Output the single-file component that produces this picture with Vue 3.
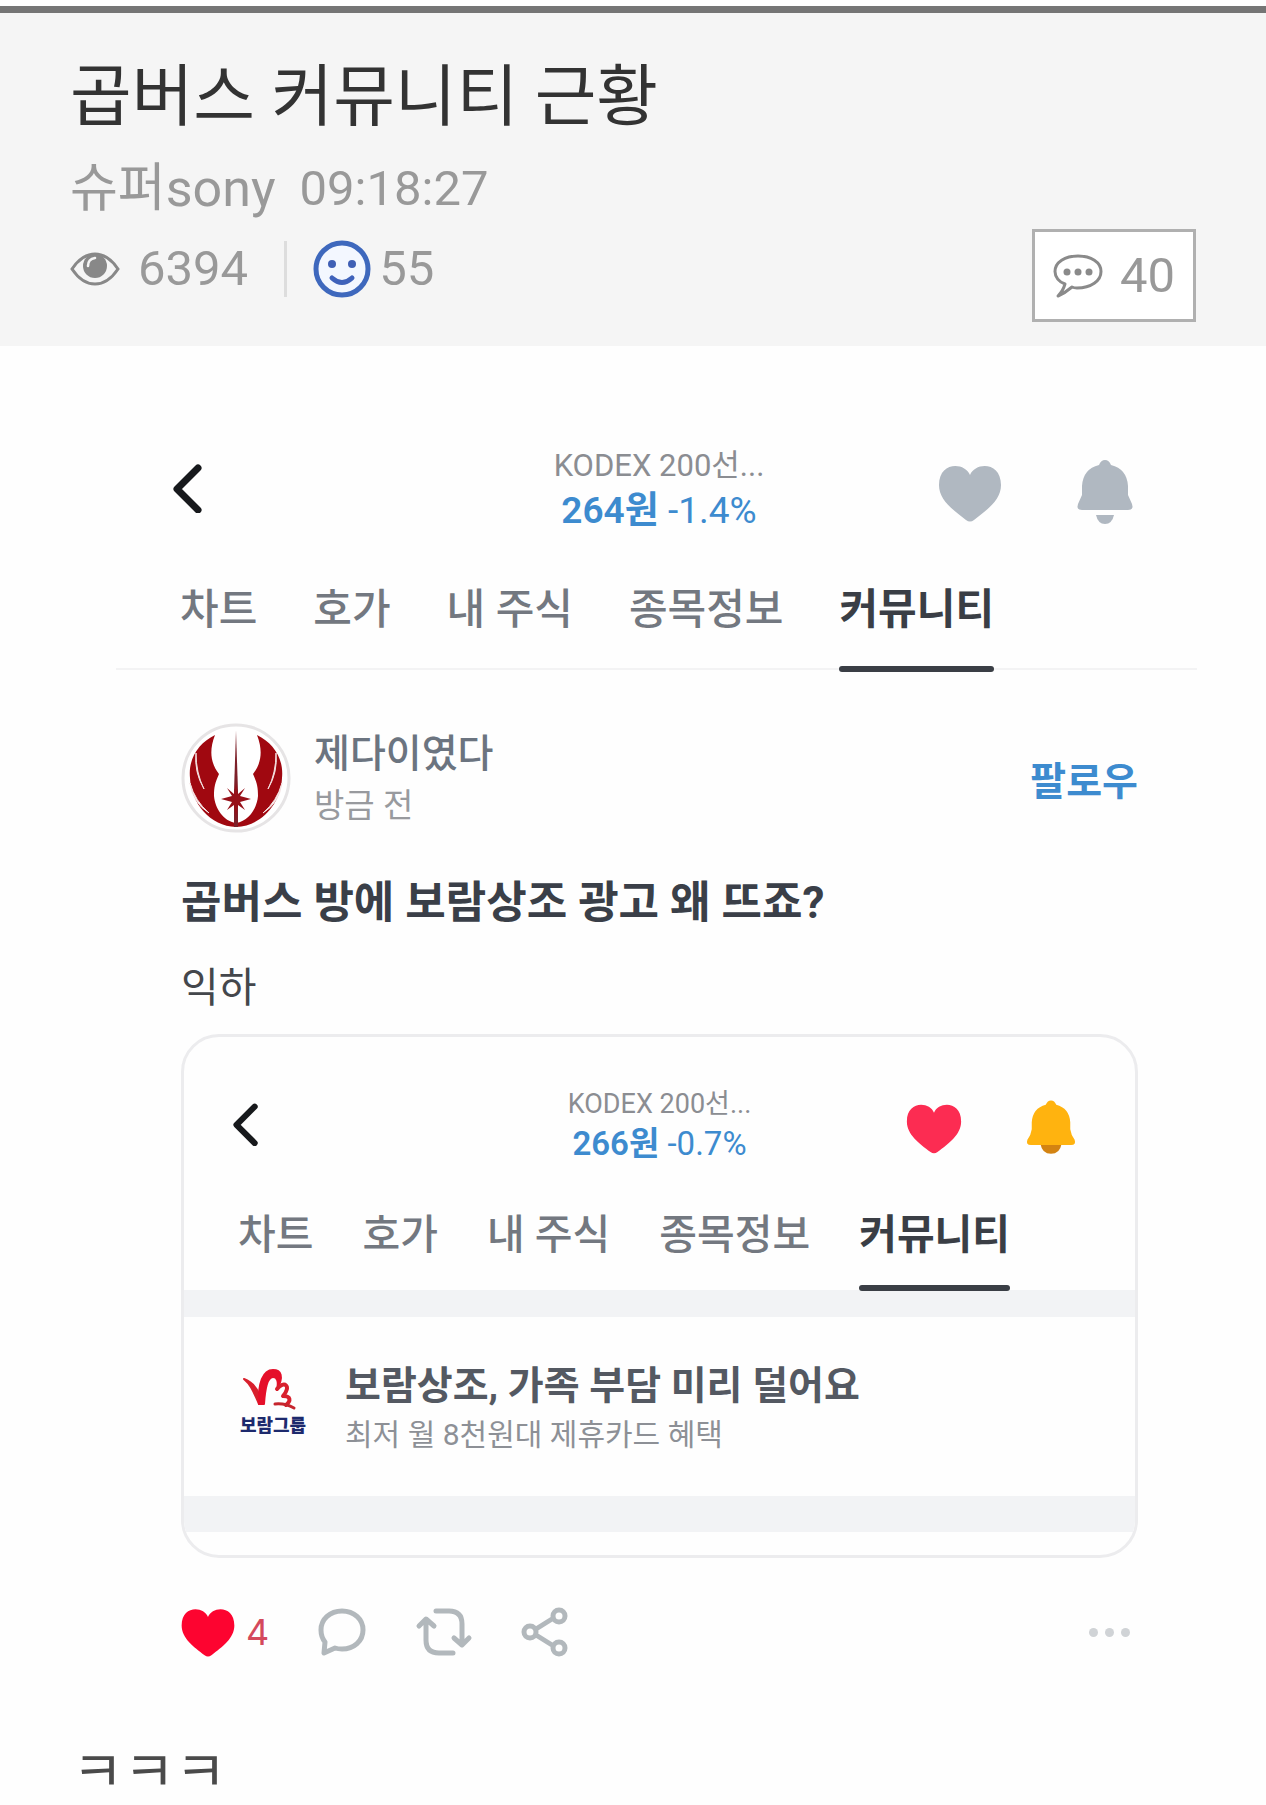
<script setup>
import { ref } from 'vue';

const tabs = ['차트', '호가', '내 주식', '종목정보', '커뮤니티'];
const activeTab = ref('커뮤니티');
const likes = ref(4);
</script>

<template>
  <svg class="sprite" aria-hidden="true">
    <symbol id="back" viewBox="0 0 30 50">
      <path d="M25 5 4 26l21 21" fill="none" stroke="currentColor" stroke-width="7" stroke-linecap="round" stroke-linejoin="round" />
    </symbol>
    <symbol id="heart" viewBox="0 0 80 80">
      <path d="M40 27C45 14 71 13 71 37c0 15-14 25-27 35q-4 3-8 0C23 62 9 52 9 37 9 13 35 14 40 27z" fill="currentColor" />
    </symbol>
  </svg>

  <header class="post-header">
    <h1>곱버스 커뮤니티 근황</h1>
    <p class="meta"><span class="writer">슈퍼sony</span><time>09:18:27</time></p>
    <div class="info">
      <div class="stats">
        <svg class="eye" viewBox="0 0 50 34">
          <path d="M2 17Q12 2 25 2t23 15Q38 32 25 32T2 17z" fill="none" stroke="#888" stroke-width="3" />
          <circle cx="25" cy="14" r="12" fill="#888" />
          <path d="M18 14q0-7 7-8" fill="none" stroke="#f5f5f5" stroke-width="2.6" stroke-linecap="round" />
        </svg>
        <span class="views">6394</span>
        <span class="divider"></span>
        <svg class="smile" viewBox="0 0 58 58">
          <circle cx="29" cy="29" r="26" fill="#f3f7ff" stroke="#3e68bd" stroke-width="5" />
          <circle cx="19" cy="24" r="4" fill="#3f5fb5" />
          <circle cx="39" cy="24" r="4" fill="#3f5fb5" />
          <path d="M19 38q10 9 20 0" fill="none" stroke="#3f62bb" stroke-width="5" stroke-linecap="round" />
        </svg>
        <span>55</span>
      </div>
      <a class="comments" href="#comments">
        <svg viewBox="0 0 50 44">
          <path d="M25 2c13 0 23 6 23 15.500S38 34 24 34q-3 0-5-1Q12 39 5 42q5-5 7-12C6 28 2 23 2 17.500 2 8 12 2 25 2z" fill="none" stroke="#8a8a8a" stroke-width="3" stroke-linejoin="round" />
          <circle cx="14" cy="18" r="3.500" fill="#8a8a8a" />
          <circle cx="25" cy="18" r="3.500" fill="#8a8a8a" />
          <circle cx="36" cy="18" r="3.500" fill="#8a8a8a" />
        </svg>
        <span>40</span>
      </a>
    </div>
  </header>

  <main>
    <section class="app">
      <div class="toolbar">
        <button class="back" aria-label="뒤로"><svg><use href="#back" /></svg></button>
        <div class="stock">
          <p class="stock-name">KODEX 200선...</p>
          <p class="price"><b>264원</b> -1.4%</p>
        </div>
        <div class="tools">
          <button aria-label="관심"><svg><use href="#heart" /></svg></button>
          <button aria-label="알림">
            <svg viewBox="0 -3 80 80">
              <path d="M40 9q4 0 6 5 16 4 17 21v9l4 9q2 6-4 6H17q-6 0-4-6l4-9v-9q1-17 17-21 2-5 6-5z" fill="currentColor" />
              <path d="M31 64h18q-2 9-9 9t-9-9z" fill="currentColor" />
            </svg>
          </button>
        </div>
      </div>

      <nav class="tabs">
        <button v-for="tab in tabs" :key="tab" :class="{ active: tab === activeTab }" @click="activeTab = tab">{{ tab }}</button>
      </nav>

      <article class="thread">
        <div class="author">
          <svg class="avatar" viewBox="0 0 110 110">
            <circle cx="55" cy="55" r="53" fill="#fff" stroke="#e6e4e5" stroke-width="3" />
            <g id="wing">
              <path d="M34 12C18 20 7 35 9 55c1 25 20 48 46 49v-4C42 98 34 85 33 73c0-9 1-13 5-22C31 42 27 30 34 12z" fill="#a00810" />
              <path d="M15 30q-2 19 8 36Q15 50 15 30zM9 60q3 20 19 30Q14 78 9 60z" fill="#fff" stroke="#f4dede" />
            </g>
            <use href="#wing" transform="matrix(-1 0 0 1 110 0)" />
            <path d="M55 8l2 60v36h-4V68z" fill="#7d2029" />
            <path d="M55 60l2 11 7-6-5 8 11 3-11 3 5 8-7-5-2 13-2-13-7 5 5-8-11-3 11-3-5-8 7 6z" fill="#971019" />
          </svg>
          <div class="who">
            <p class="nick">제다이였다</p>
            <p class="ago">방금 전</p>
          </div>
          <button class="follow">팔로우</button>
        </div>
        <h2>곱버스 방에 보람상조 광고 왜 뜨죠?</h2>
        <p class="text">익하</p>

        <div class="shot">
          <div class="toolbar">
            <button class="back" aria-label="뒤로"><svg><use href="#back" /></svg></button>
            <div class="stock">
              <p class="stock-name">KODEX 200선...</p>
              <p class="price"><b>266원</b> -0.7%</p>
            </div>
            <div class="tools">
              <button class="liked" aria-label="관심"><svg><use href="#heart" /></svg></button>
              <button class="notified" aria-label="알림">
                <svg viewBox="0 -3 80 80">
                  <path d="M28 60h24q-2 11-12 11T28 60z" fill="#d38312" />
                  <path d="M40 10q4 0 6 5 15 4 16 20v8q1 7 5 12 2 6-4 6H17q-6 0-4-6 4-5 5-12v-8q1-16 16-20 2-5 6-5z" fill="currentColor" />
                </svg>
              </button>
            </div>
          </div>
          <nav class="tabs">
            <button v-for="tab in tabs" :key="tab" :class="{ active: tab === '커뮤니티' }">{{ tab }}</button>
          </nav>
          <a class="ad" href="#ad">
            <span class="brand">
              <svg viewBox="0 0 68 44">
                <g stroke-linecap="round" stroke-linejoin="round">
                  <path d="M5 10q11 4 16 17l-1 8C14 22 13 17 5 10z" fill="#d8202d" stroke="#d8202d" stroke-width="2" />
                  <path d="M20 35C19 14 24 1 34 1c8 0 11 6 4 20 2-9 0-13-4-13-6 0-8 12-9 27z" fill="#e5102a" stroke="#e5102a" stroke-width="2" />
                  <path d="M38 20c7-9 15-3 6 7 8 0 8 5 3 9" fill="none" stroke="#d8202d" stroke-width="4" />
                  <path d="M36 35q10-1 19 4" fill="none" stroke="#c6252d" stroke-width="3" />
                </g>
              </svg>
              <b>보람그룹</b>
            </span>
            <span class="copy">
              <strong>보람상조, 가족 부담 미리 덜어요</strong>
              <small>최저 월 8천원대 제휴카드 혜택</small>
            </span>
          </a>
        </div>

        <div class="actions">
          <button class="like" @click="likes++"><svg class="like-icon"><use href="#heart" /></svg>{{ likes }}</button>
          <button aria-label="댓글">
            <svg viewBox="0 0 50 50">
              <path d="M25 4c12 0 21 8 21 19S37 42 25 42q-4 0-7-1L7 46l1-11Q4 30 4 23C4 12 13 4 25 4z" fill="none" stroke="currentColor" stroke-width="5" stroke-linejoin="round" />
            </svg>
          </button>
          <button aria-label="리포스트">
            <svg class="repost" viewBox="0 0 58 50">
              <path d="M21 4h13q13 0 13 13v20M39 31l8 7 7-7M38 46H24Q11 46 11 33V13M4 19l7-7 8 7" fill="none" stroke="currentColor" stroke-width="5" stroke-linecap="round" stroke-linejoin="round" />
            </svg>
          </button>
          <button aria-label="공유">
            <svg viewBox="0 0 50 50">
              <path d="M15 22l16-10M15 28l16 10" stroke="currentColor" stroke-width="5" />
              <g fill="none" stroke="currentColor" stroke-width="5">
                <circle cx="9" cy="25" r="6" />
                <circle cx="38" cy="9" r="6" />
                <circle cx="38" cy="41" r="6" />
              </g>
            </svg>
          </button>
          <button class="more" aria-label="더보기"><i></i><i></i><i></i></button>
        </div>
      </article>
    </section>
    <p class="comment-text">ㅋㅋㅋ</p>
  </main>
</template>

<style>
body {
  margin: 0;
  background: #fefefe;
}
</style>

<style scoped>
* {
  box-sizing: border-box;
}

h1, h2, p {
  margin: 0;
}

header, main {
  font-family: Roboto, "Noto Sans CJK KR", sans-serif;
}

button {
  padding: 0;
  border: 0;
  background: none;
  color: inherit;
  font: inherit;
  cursor: pointer;
}

a {
  color: inherit;
  text-decoration: none;
}

svg {
  display: block;
  flex: none;
}

.sprite {
  position: absolute;
  width: 0;
  height: 0;
}

/* post header */
.post-header {
  margin-top: 6px;
  padding: 44px 70px 24px;
  border-top: 7px solid #757575;
  background: #f5f5f5;
  color: #999;
  font-size: 49px;
  line-height: 60px;
}

h1 {
  color: #333;
  font-size: 67px;
  font-weight: 400;
  line-height: 80px;
}

.meta {
  display: flex;
  gap: 24px;
  margin: 22px 0 10px;
}

.writer {
  font-size: 52px;
}

.info {
  display: flex;
  align-items: center;
  justify-content: space-between;
}

.stats {
  display: flex;
  align-items: center;
  padding-bottom: 14px;
}

.eye {
  width: 50px;
  height: 34px;
}

.views {
  margin-left: 18px;
}

.divider {
  width: 3px;
  height: 56px;
  margin: 0 26px 0 36px;
  background: #ddd;
}

.smile {
  width: 58px;
  height: 58px;
  margin-right: 8px;
}

.comments {
  display: flex;
  align-items: center;
  gap: 17px;
  height: 93px;
  padding: 0 18px;
  border: 3px solid #b0b0b0;
  background: #fff;
}

.comments svg {
  width: 50px;
  height: 44px;
}

/* stock app */
.app {
  margin: 97px 69px 0 116px;
}

.toolbar {
  display: grid;
  grid-template-columns: 1fr auto 1fr;
  align-items: center;
  padding: 0 52px 0 57px;
}

.back {
  justify-self: start;
  color: #17191c;
}

.back svg {
  width: 30px;
  height: 50px;
}

.stock {
  text-align: center;
}

.stock-name {
  color: #8b8d92;
  font-size: 31px;
  line-height: 45px;
}

.price {
  color: #3d8bcf;
  font-size: 37px;
  line-height: 45px;
}

.price b {
  font-weight: 600;
}

.tools {
  display: flex;
  justify-content: flex-end;
  gap: 55px;
  color: #b0b8c1;
}

.tools svg {
  width: 80px;
  height: 80px;
}

.tabs {
  display: flex;
  gap: 56px;
  margin-top: 47px;
  padding: 0 64px;
  border-bottom: 2px solid #f3f3f4;
  color: #737880;
  font-size: 42px;
  font-weight: 500;
  line-height: 60px;
}

.tabs button {
  position: relative;
  padding-bottom: 28px;
  white-space: nowrap;
}

.tabs .active {
  color: #3a3e45;
  font-weight: 700;
}

.tabs .active::after {
  content: '';
  position: absolute;
  right: 0;
  bottom: -4px;
  left: 0;
  height: 6px;
  border-radius: 3px;
  background: #3a3e45;
}

/* thread */
.thread {
  padding: 53px 59px 0 65px;
}

.author {
  display: flex;
  align-items: center;
}

.avatar {
  width: 110px;
  height: 110px;
  margin-right: 23px;
}

.who {
  padding-top: 4px;
  line-height: 52px;
}

.nick {
  color: #6b7480;
  font-size: 39px;
  font-weight: 500;
}

.ago {
  color: #989a9e;
  font-size: 33px;
}

.follow {
  margin-left: auto;
  color: #3d8bcf;
  font-size: 39px;
  font-weight: 700;
}

h2 {
  margin-top: 40px;
  color: #3a3f48;
  font-size: 44px;
  font-weight: 700;
  line-height: 60px;
}

.text {
  margin-top: 25px;
  color: #44474c;
  font-size: 41px;
  line-height: 60px;
}

/* attached capture */
.shot {
  overflow: hidden;
  margin-top: 16px;
  padding: 47px 0 23px;
  border: 3px solid #ececee;
  border-radius: 38px;
}

.shot .toolbar {
  padding: 0 49px;
}

.shot .back svg {
  width: 26px;
  height: 44px;
}

.shot .stock-name {
  font-size: 27px;
  line-height: 40px;
}

.shot .price {
  font-size: 33px;
  line-height: 40px;
}

.shot .tools {
  gap: 47px;
}

.shot .tools svg {
  width: 70px;
  height: 70px;
}

.tools .liked {
  color: #fc2c52;
}

.tools .notified {
  color: #ffb30f;
}

.shot .tabs {
  gap: 49px;
  margin-top: 41px;
  padding: 0 54px;
  border-bottom: 27px solid #f2f3f5;
  font-size: 41px;
}

.shot .tabs button {
  padding-bottom: 25px;
}

.shot .tabs .active::after {
  bottom: -1px;
}

.ad {
  display: flex;
  gap: 38px;
  padding: 42px 55px 39px;
  border-bottom: 36px solid #f2f3f5;
}

.brand {
  display: flex;
  flex-direction: column;
  align-items: center;
  width: 68px;
  padding-top: 10px;
  color: #1d2a6d;
  font-size: 18px;
  line-height: 26px;
  white-space: nowrap;
}

.brand svg {
  width: 68px;
  height: 44px;
}

.brand b {
  font-weight: 900;
}

.copy {
  display: flex;
  flex-direction: column;
}

.copy strong {
  color: #545962;
  font-size: 39px;
  font-weight: 700;
  line-height: 54px;
}

.copy small {
  color: #8d9096;
  font-size: 30px;
  line-height: 44px;
}

/* actions */
.actions {
  display: flex;
  align-items: center;
  height: 60px;
  margin-top: 44px;
  color: #b2b8bc;
}

.actions button {
  margin-right: 48px;
}

.actions svg {
  width: 50px;
  height: 50px;
}

.actions .repost {
  width: 58px;
}

.actions .like {
  display: flex;
  align-items: center;
  color: #d4495c;
  font-family: Inter, sans-serif;
  font-size: 36px;
}

.actions .like-icon {
  width: 68px;
  height: 68px;
  margin: -8px 4px 0 -7px;
  color: #fd0430;
}

.actions .more {
  display: flex;
  gap: 7px;
  margin: 0 8px 0 auto;
}

.more i {
  width: 9px;
  height: 9px;
  border-radius: 50%;
  background: #d0d3d6;
}

.comment-text {
  margin: 75px 72px 0;
  color: #4a4a4a;
  font-size: 56px;
  line-height: 70px;
}
</style>
